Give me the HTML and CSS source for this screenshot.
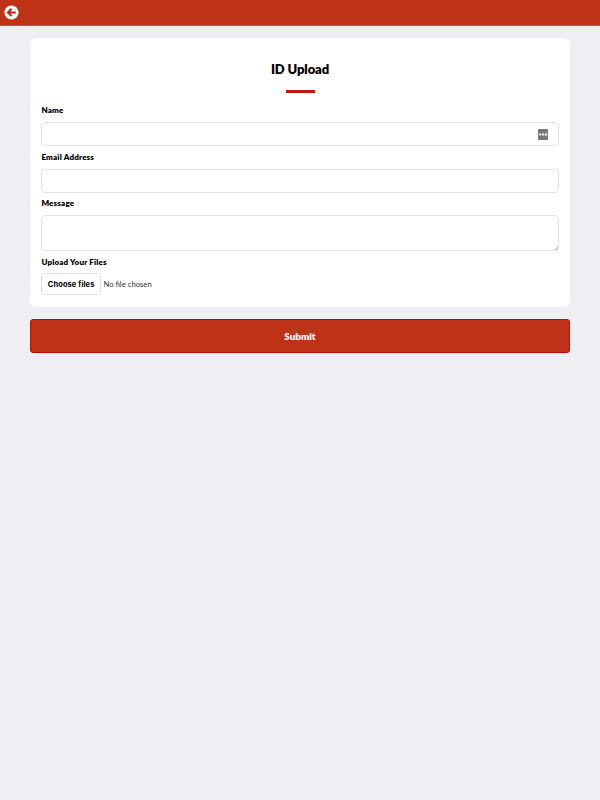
FILE: index.html
```
<!DOCTYPE html>
<html lang="en">
<head>
  <meta charset="utf-8">
  <title>ID Upload</title>
  <link rel="stylesheet" href="styles.css">
</head>
<body>
  <header class="topbar">
    <a class="back" href="#" aria-label="Back">
      <svg width="15" height="15" viewBox="0 0 15 15">
        <circle cx="7.5" cy="7.5" r="7.1" fill="#fff"/>
        <path d="M7.5 3.7 L3.9 7.4 L7.5 11.1 M4 7.4 H11.8" fill="none" stroke="#c1200f" stroke-width="2"/>
      </svg>
    </a>
  </header>

  <form class="upload-form">
    <div class="card">
      <h1 class="title">ID Upload</h1>
      <div class="title-line"></div>

      <label class="label" for="name">Name</label>
      <div class="input-wrap">
        <input class="field" type="text" id="name">
        <!-- password manager button -->
        <svg class="manager" width="10" height="11" viewBox="0 0 10 11">
          <rect width="10" height="11" rx="1" fill="#777"/>
          <path d="M1.3 4.5h1.9v1.9H1.3zM4 4.5h1.9v1.9H4zM6.7 4.5h1.3v1.9H6.7zM8.5 3.5h.6v3.6h-.6z" fill="#fff"/>
        </svg>
      </div>

      <label class="label" for="email">Email Address</label>
      <input class="field email" type="email" id="email">

      <label class="label" for="message">Message</label>
      <div class="input-wrap">
        <textarea class="field message" id="message"></textarea>
        <svg class="grip" width="3" height="3" viewBox="0 0 3 3">
          <path d="M0 3L3 0M1.5 3L3 1.5" stroke="#777" stroke-width=".6"/>
        </svg>
      </div>

      <label class="label" for="files">Upload Your Files</label>
      <label class="file">
        <input type="file" id="files" multiple hidden>
        <span class="file-button">Choose files</span>
        <span class="file-name">No file chosen</span>
      </label>
    </div>

    <button class="submit" type="submit">Submit</button>
  </form>
</body>
</html>
```

FILE: styles.css
```
* {
  box-sizing: border-box;
}

body {
  margin: 0;
  min-height: 100vh;
  background-color: #eeeef3;
  color: #000;
  font-family: Lato, sans-serif;
}

/* Top bar */
.topbar {
  display: flex;
  align-items: center;
  height: 26px;
  padding-left: 4px;
  background-color: #be3218;
  border-bottom: 1px solid #c95542;
}

.back {
  display: flex;
}

/* Form card */
.upload-form {
  padding: 12px 30px;
}

.card {
  height: 269px;
  padding: 23px 11.4px 0;
  background-color: #fff;
  border-radius: 6px;
}

.title {
  margin: 0;
  font-size: 13px;
  font-weight: 800;
  letter-spacing: -0.1px;
  line-height: 16px;
  text-align: center;
}

.title-line {
  width: 29px;
  height: 3px;
  margin: 13px auto 12px;
  background-color: #c01a10;
}

.label {
  display: block;
  height: 17px;
  font-size: 8px;
  font-weight: 800;
  letter-spacing: 0.17px;
  line-height: 11px;
}

.input-wrap {
  position: relative;
}

.field {
  display: block;
  width: 100%;
  height: 24px;
  margin: 0 0 6px;
  padding: 0 6px;
  border: 1px solid #e3e3e3;
  border-radius: 4px;
  background-color: #fff;
  font-family: inherit;
  font-size: 8px;
  outline: none;
}

.email {
  margin-bottom: 5.3px;
}

.message {
  height: 36px;
  resize: none;
}

.manager {
  position: absolute;
  top: 6.5px;
  right: 10.6px;
}

.grip {
  position: absolute;
  right: 1px;
  bottom: 1px;
}

/* File picker */
.file {
  display: flex;
  align-items: center;
  gap: 2.5px;
  margin-top: -1px;
  font-size: 8px;
}

.file-button {
  width: 59.5px;
  height: 22px;
  border: 1px solid #e3e3e3;
  border-radius: 3px;
  font-family: Inter, sans-serif;
  font-size: 7.5px;
  font-weight: 700;
  letter-spacing: 0.08px;
  line-height: 21px;
  text-align: center;
}

.file-name {
  color: #333;
  font-size: 7.7px;
}

.submit {
  display: block;
  width: 100%;
  height: 34px;
  margin-top: 12px;
  padding: 0;
  border: 1px solid #bd0a08;
  border-radius: 3px;
  background-color: #be3218;
  color: #fff;
  font-family: inherit;
  font-size: 9.8px;
  font-weight: 800;
}
```
